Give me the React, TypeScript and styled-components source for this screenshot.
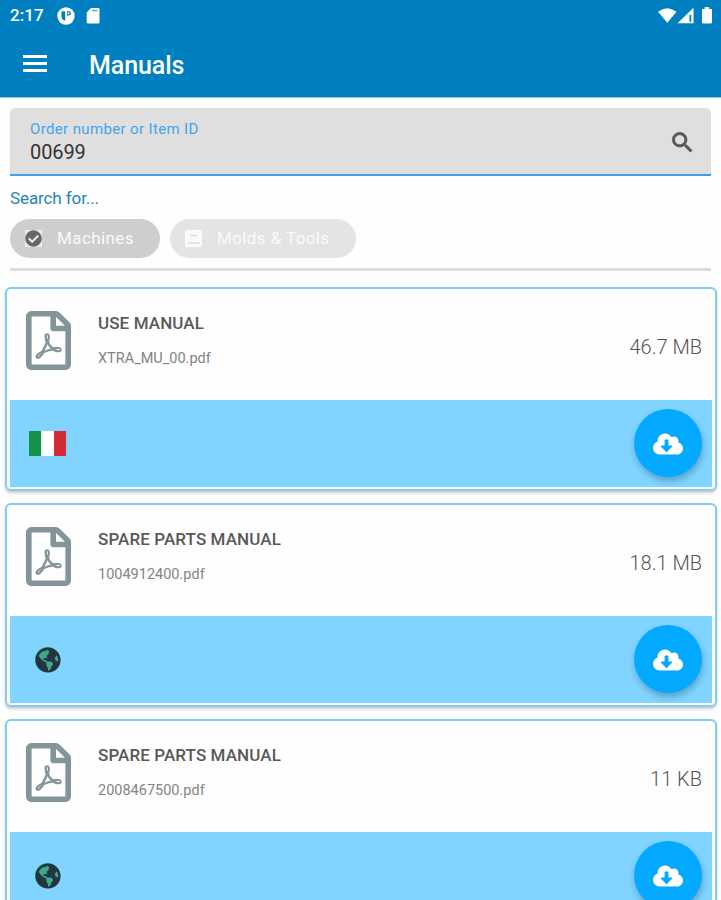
import React from 'react';
import styled, { createGlobalStyle } from 'styled-components';
import { FaRegFilePdf, FaCloudDownloadAlt, FaGlobeAmericas, FaCheckCircle } from 'react-icons/fa';
import { MdSearch } from 'react-icons/md';

const GlobalStyle = createGlobalStyle`
  * { box-sizing: border-box; }
  html, body { margin: 0; height: 100%; overflow: hidden; background: #fefefe; }
  body { font-family: Roboto, "Liberation Sans", sans-serif; }
`;

const Screen = styled.div`
  height: 900px;
  overflow: hidden;
  display: flex;
  flex-direction: column;
`;

const Header = styled.header`
  flex: none;
  height: 98px;
  background: #0080c0;
  color: #fff;
  border-bottom: 1px solid #8dbfe2;
`;

const StatusBar = styled.div`
  display: flex;
  align-items: center;
  height: 31px;
  padding: 0 8px 0 10px;
`;

const Clock = styled.span`
  width: 47px;
  font-size: 17px;
  font-weight: 500;
  line-height: 31px;
  letter-spacing: 0.1px;
`;

const StatusIcons = styled.div<{ $end?: boolean }>`
  display: flex;
  align-items: center;
  margin-left: ${(p) => (p.$end ? 'auto' : '0')};
  svg { display: block; }
`;

const Toolbar = styled.div`
  display: flex;
  align-items: center;
  height: 65px;
  padding-left: 23px;
`;

const MenuButton = styled.button`
  width: 24px;
  height: 17px;
  padding: 0;
  border: 0;
  background: none;
  display: flex;
  flex-direction: column;
  justify-content: space-between;
  margin: 0 42px 0 0;
`;

const MenuLine = styled.span`
  height: 3px;
  background: #fff;
`;

const Title = styled.h1`
  margin: 4px 0 0;
  font-size: 25px;
  font-weight: 500;
  line-height: 30px;
  letter-spacing: -0.1px;
`;

const SearchPanel = styled.section`
  flex: none;
  height: 163px;
  margin: 10px 10px 0 10px;
  border-bottom: 3px solid #dcdcdc;
`;

const SearchField = styled.div`
  display: flex;
  align-items: center;
  justify-content: space-between;
  height: 68px;
  padding: 0 15px 0 20px;
  background: #dfdfdf;
  border-bottom: 2.5px solid #3da2ee;
  border-radius: 5px 5px 0 0;
`;

const SearchIcon = styled(MdSearch)`
  margin-top: 2px;
  color: #555;
  path:last-child { stroke: #555; stroke-width: 0.7px; }
`;

const FieldLabel = styled.div`
  color: #43a4ee;
  font-size: 15px;
  line-height: 20px;
  letter-spacing: 0.36px;
`;

const FieldValue = styled.div`
  padding-top: 1px;
  margin-bottom: -1px;
  color: #333;
  font-size: 20px;
  line-height: 24px;
  letter-spacing: -0.1px;
`;

const Hint = styled.div`
  margin-top: 12px;
  color: #2683bd;
  font-size: 17px;
  line-height: 20px;
  letter-spacing: -0.1px;
`;

const Chips = styled.div`
  display: flex;
  gap: 10px;
  margin-top: 11px;
`;

const Chip = styled.div<{ $active?: boolean; $width: number }>`
  display: flex;
  align-items: center;
  width: ${(p) => p.$width}px;
  height: 39px;
  padding: 0 0 1px 15px;
  border-radius: 20px;
  background: ${(p) => (p.$active ? '#cecece' : '#e4e4e4')};
  color: #fafafa;
  font-size: 17px;
  letter-spacing: 0.4px;
`;

const ChipIcon = styled.span<{ $checked?: boolean }>`
  display: grid;
  place-items: center;
  width: 17px;
  height: 17px;
  margin-right: 15px;
  background: ${(p) => (p.$checked ? '#ececec' : 'transparent')};
  color: #686868;
  svg { display: block; }
`;

const CardList = styled.main`
  flex: none;
  display: flex;
  flex-direction: column;
  gap: 12px;
  padding: 16px 4px 0 5px;
`;

const Card = styled.article`
  height: 204px;
  padding: 0 2px;
  border: 2px solid #82cdf1;
  border-radius: 6px;
  background: #fefefe;
  box-shadow: 0 2px 3px rgba(0, 0, 0, 0.2);
`;

const CardInfo = styled.div`
  display: flex;
  height: 111px;
  padding: 0 11px 0 17px;
`;

const DocumentIcon = styled(FaRegFilePdf)`
  flex: none;
  margin: 22px 27px 0 0;
  width: 45px;
  height: 59px;
  color: #84959a;
`;

const Names = styled.div`
  flex: 1;
  padding-top: 23px;
`;

const ManualName = styled.h2`
  margin: 0;
  color: #595959;
  font-size: 17px;
  font-weight: 500;
  line-height: 22px;
  letter-spacing: 0.1px;
  white-space: nowrap;
`;

const FileName = styled.div`
  margin-top: 15px;
  color: #848484;
  font-size: 14.5px;
  line-height: 20px;
`;

const FileSize = styled.div`
  padding-top: 46px;
  color: #555;
  font-size: 20px;
  font-weight: 300;
  line-height: 25px;
  letter-spacing: 0;
`;

const CardFooter = styled.div`
  display: flex;
  align-items: center;
  justify-content: space-between;
  height: 87px;
  margin: 0 1px;
  padding: 0 10px 1px 18px;
  background: #80d4ff;
`;

const Language = styled.div`
  display: grid;
  place-items: center;
  width: 39px;
`;

const Flag = styled.div`
  width: 37px;
  height: 25px;
  background: linear-gradient(90deg, #129347 33.3%, #fff 33.3% 66.6%, #d42c36 66.6%);
`;

const Globe = styled.div`
  display: grid;
  place-items: center;
  width: 25px;
  height: 25px;
  border-radius: 50%;
  background: #3caa91;
  color: #25353f;
  svg { display: block; }
`;

const DownloadButton = styled.button`
  display: grid;
  place-items: center;
  width: 68px;
  height: 68px;
  padding: 0;
  border: 0;
  border-radius: 50%;
  background: #03a9ff;
  color: #fff;
  box-shadow: 1px 4px 6px rgba(0, 60, 100, 0.32);
  svg { display: block; margin-top: 1px; }
`;

type Manual = { name: string; file: string; size: string; language: 'it' | 'world' };

const manuals: Manual[] = [
  { name: 'USE MANUAL', file: 'XTRA_MU_00.pdf', size: '46.7 MB', language: 'it' },
  { name: 'SPARE PARTS MANUAL', file: '1004912400.pdf', size: '18.1 MB', language: 'world' },
  { name: 'SPARE PARTS MANUAL', file: '2008467500.pdf', size: '11 KB', language: 'world' },
];

function ManualCard({ manual }: { manual: Manual }) {
  return (
    <Card>
      <CardInfo>
        <DocumentIcon preserveAspectRatio="none" />
        <Names>
          <ManualName>{manual.name}</ManualName>
          <FileName>{manual.file}</FileName>
        </Names>
        <FileSize>{manual.size}</FileSize>
      </CardInfo>
      <CardFooter>
        <Language>
          {manual.language === 'it' ? <Flag /> : <Globe><FaGlobeAmericas size={26} /></Globe>}
        </Language>
        <DownloadButton aria-label="Download"><FaCloudDownloadAlt size={30} /></DownloadButton>
      </CardFooter>
    </Card>
  );
}

export default function App() {
  return (
    <Screen>
      <GlobalStyle />
      <Header>
        <StatusBar>
          <Clock>2:17</Clock>
          <StatusIcons>
            <svg width="18" height="18" viewBox="0 0 18 18">
              <circle cx="9" cy="9" r="8.7" fill="#fff" />
              <path d="M6 4.2H8.2V13.8Q4.4 13 4.4 9V5.6Q4.4 4.2 6 4.2ZM10 4.2H12.2Q14 4.2 14 6.2T12.2 8.4H10Z" fill="#0080c0" />
              <circle cx="11.6" cy="6.2" r="1" fill="#fff" />
            </svg>
            <svg width="31" height="18" viewBox="0 0 31 18">
              <path d="M16 1H23.2Q24.5 1 24.5 2.3V15.2Q24.5 16.5 23.2 16.5H13Q11.7 16.5 11.7 15.2V5.5Z" fill="#fff" />
              <path d="M17 3.5H22.5" stroke="#0080c0" strokeWidth="1.5" opacity=".65" />
            </svg>
          </StatusIcons>
          <StatusIcons $end>
            <svg width="56" height="20" viewBox="0 0 56 20">
              <path d="M1 5.8Q10.3-1.2 19.5 5.8L10.3 16.8Z" fill="#fff" />
              <path d="M20.5 17.3L36.5 1.7V17.3Z" fill="#fff" />
              <path d="M33.4 8.8V15.8" stroke="#0080c0" strokeWidth="1.8" />
              <path d="M45 3H47.7V1H52V3H55V16Q55 17.5 53.5 17.5H46.5Q45 17.5 45 16Z" fill="#fff" />
            </svg>
          </StatusIcons>
        </StatusBar>
        <Toolbar>
          <MenuButton aria-label="Menu"><MenuLine /><MenuLine /><MenuLine /></MenuButton>
          <Title>Manuals</Title>
        </Toolbar>
      </Header>
      <SearchPanel>
        <SearchField>
          <div>
            <FieldLabel>Order number or Item ID</FieldLabel>
            <FieldValue>00699</FieldValue>
          </div>
          <SearchIcon size={27} />
        </SearchField>
        <Hint>Search for...</Hint>
        <Chips>
          <Chip $active $width={150}>
            <ChipIcon $checked><FaCheckCircle size={17} /></ChipIcon>Machines
          </Chip>
          <Chip $width={186}>
            <ChipIcon>
              <svg width="17" height="17" viewBox="0 0 17 17">
                <rect width="17" height="17" rx="1.5" fill="#fafafa" />
                <path d="M5 5.5H12M3 13H14.5" fill="none" stroke="#dcdcdc" strokeWidth="1.3" />
              </svg>
            </ChipIcon>
            Molds &amp; Tools
          </Chip>
        </Chips>
      </SearchPanel>
      <CardList>
        {manuals.map((manual) => <ManualCard key={manual.file} manual={manual} />)}
      </CardList>
    </Screen>
  );
}
